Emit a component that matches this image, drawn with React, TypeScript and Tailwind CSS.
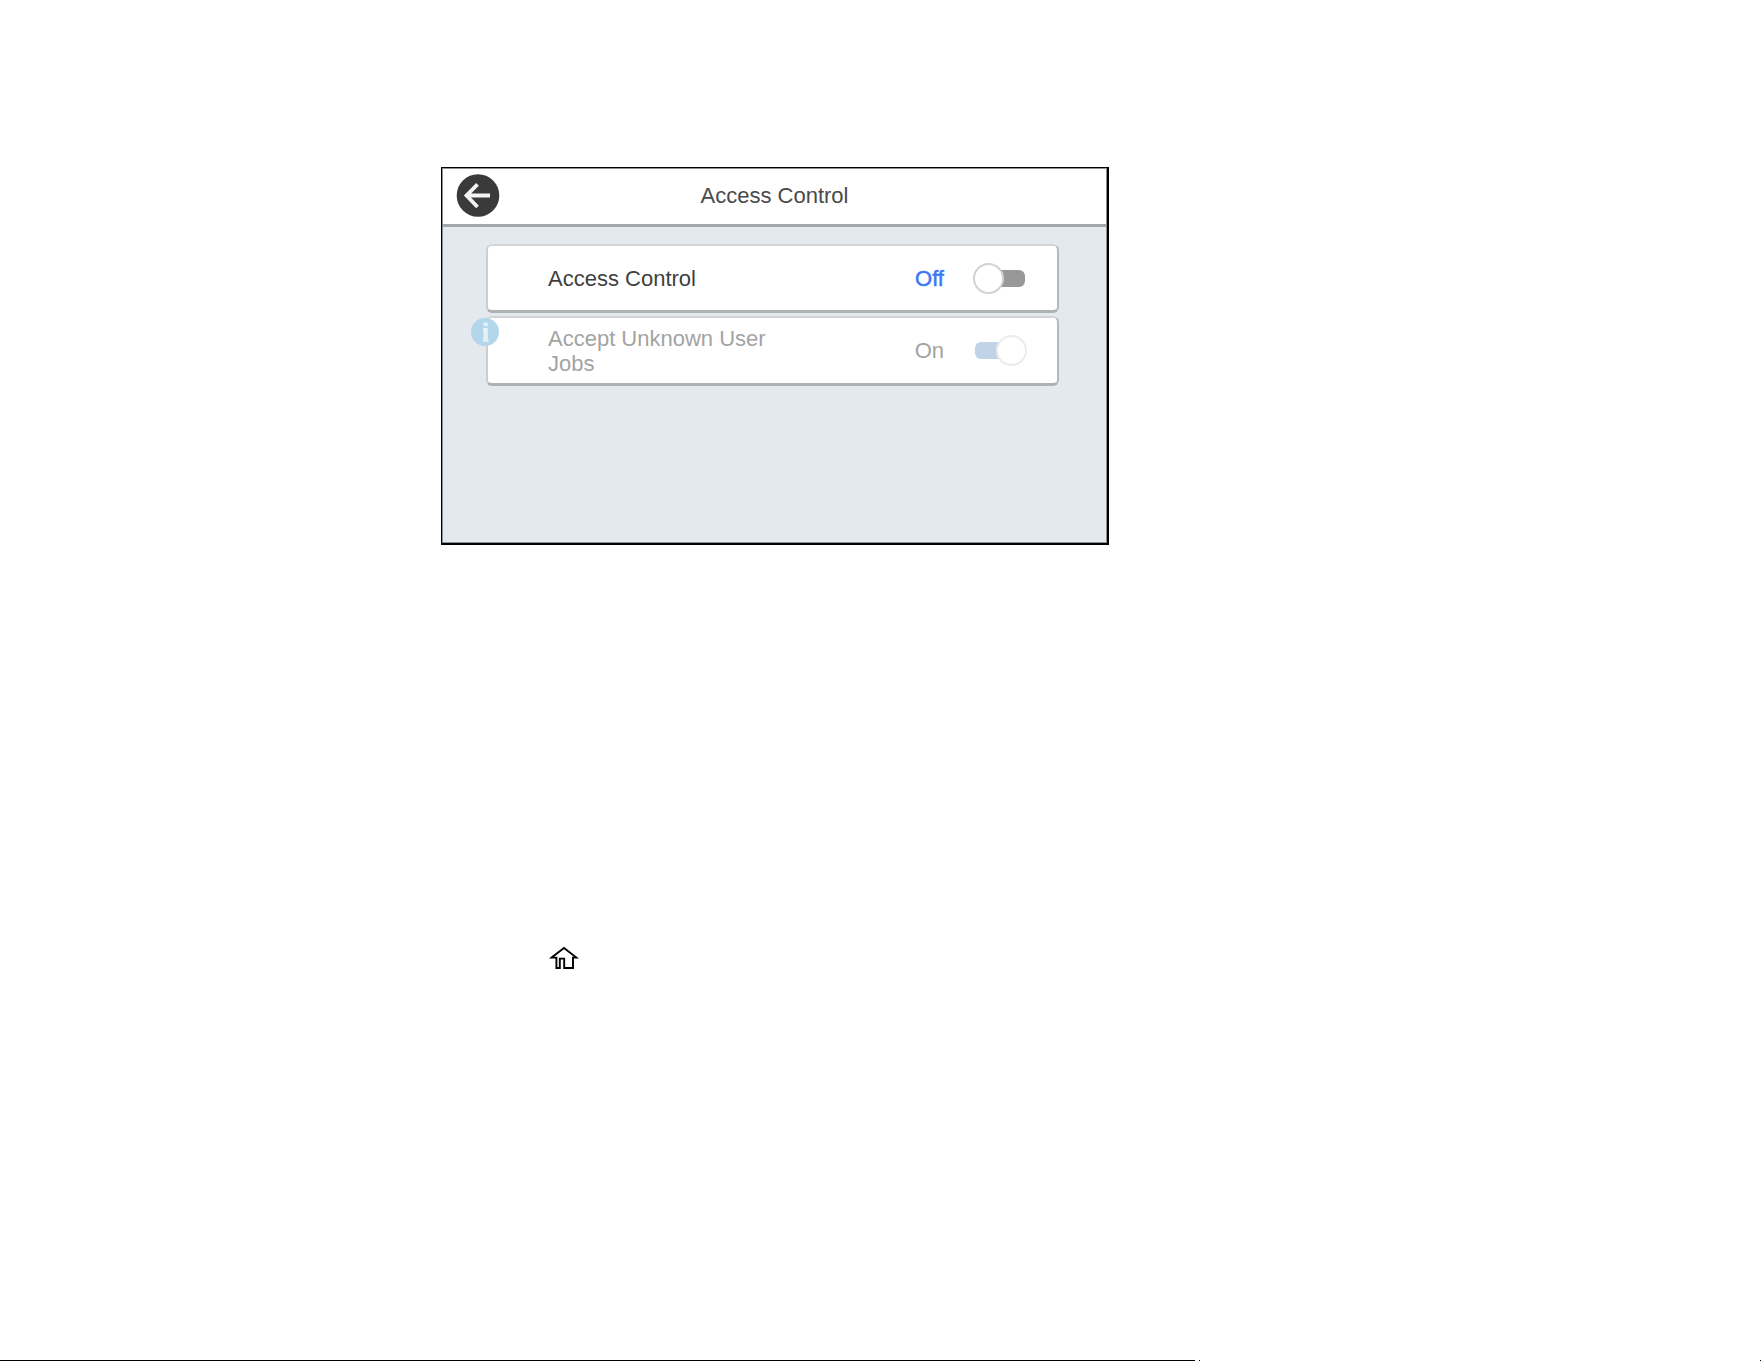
import React from 'react';

const BackButton: React.FC = () => (
  <button type="button" aria-label="Back" className="h-11 w-11 shrink-0">
    <svg viewBox="0 0 44 44" className="h-11 w-11" fill="none">
      <circle cx="22" cy="22.5" r="21.3" fill="#3a3a3a" />
      <path d="M21.5 11.3 L10.5 22.5 L21.5 34 M11 22.5 H34" stroke="#f4f4f4" strokeWidth="3.8" />
    </svg>
  </button>
);

const InfoBadge: React.FC = () => (
  <svg viewBox="0 0 28 28" className="absolute top-0 -left-[17px] h-7 w-7">
    <circle cx="14" cy="14" r="14" fill="#b4d6ea" />
    <path d="M12.4 4.5h4.4v3.6h-4.4z M12 10h4.8v11.6h1v2.2h-6v-2.2h.6v-9.4H12z" fill="#e4f1f8" />
  </svg>
);

const HomeIcon: React.FC = () => (
  <svg viewBox="0 0 30 24" className="h-6 w-[30px]" fill="none" stroke="#000" strokeWidth="1.9">
    <path d="M2.6 11.6 L15 2 L27.4 11.6 H24 V22 H15.2 V12.6 H10.8 V22 H7.4 V11.6 Z" />
  </svg>
);

const Home: React.FC = () => (
  <a href="#home" aria-label="Home" className="mt-[401px] ml-[549px] block w-[30px]">
    <HomeIcon />
  </a>
);

const App: React.FC = () => {
  return (
    <div className="flex min-h-screen flex-col bg-white font-['Liberation_Sans',Arial,sans-serif] text-[22px] leading-[25px] text-[#4a4a4a]">
      <main className="mt-[167px] ml-[441px] min-h-[378px] max-w-[668px] border border-r-2 border-b-2 border-black bg-[#e4e9ed]">
        <div className="min-h-[375px] border border-[#8c9092]">
          <header className="grid grid-cols-[44px_1fr_44px] items-center border-b-3 border-[#a5a8aa] bg-white px-[13px] pt-1 pb-[7px]">
            <BackButton />
            <h1 className="text-center">Access Control</h1>
          </header>

          <div className="flex flex-col gap-[3px] pt-[17px] pr-[47px] pl-[43px]">
            <section className="flex min-h-[69px] items-center rounded-md border-2 border-t-[#d0d6d9] border-r-[#b4b9bc] border-b-3 border-b-[#adb2b4] border-l-[#c9ced1] bg-white pr-8 pl-[60px]">
              <label htmlFor="access" className="flex-1 text-[#3f3f3f]">Access Control</label>
              <span className="mr-[31px] text-[#3b78f5] [-webkit-text-stroke:0.5px_#3b78f5]">Off</span>
              <input
                id="access"
                type="checkbox"
                role="switch"
                className="relative h-[17px] w-[50px] appearance-none rounded-md bg-[#989898] before:absolute before:-top-[7px] before:-left-[2px] before:h-[31px] before:w-[31px] before:rounded-full before:border-2 before:border-[#cfd2d6] before:bg-white"
              />
            </section>

            <section className="relative flex min-h-[70px] items-center rounded-md border-2 border-t-[#d0d6d9] border-r-[#b4b9bc] border-b-3 border-b-[#adb2b4] border-l-[#c9ced1] bg-white pr-8 pl-[60px]">
              <InfoBadge />
              <label htmlFor="unknown" className="flex-1 text-[#a3a3a3]">
                Accept Unknown User
                <br />
                Jobs
              </label>
              <span className="mr-[31px] text-[#a3a3a3]">On</span>
              <input
                id="unknown"
                type="checkbox"
                role="switch"
                defaultChecked
                disabled
                className="relative h-[17px] w-[50px] appearance-none rounded-md bg-[#c1d3e6] before:absolute before:-top-[7px] before:-right-[2px] before:h-[31px] before:w-[31px] before:rounded-full before:border-2 before:border-[#ececee] before:bg-white"
              />
            </section>
          </div>
        </div>
      </main>

      <Home />

      <footer className="mt-auto flex h-px">
        <div className="w-[1195px] bg-black" />
        <div className="ml-1 w-px bg-black" />
        <div className="ml-auto w-px bg-black" />
      </footer>
    </div>
  );
};

export default App;
